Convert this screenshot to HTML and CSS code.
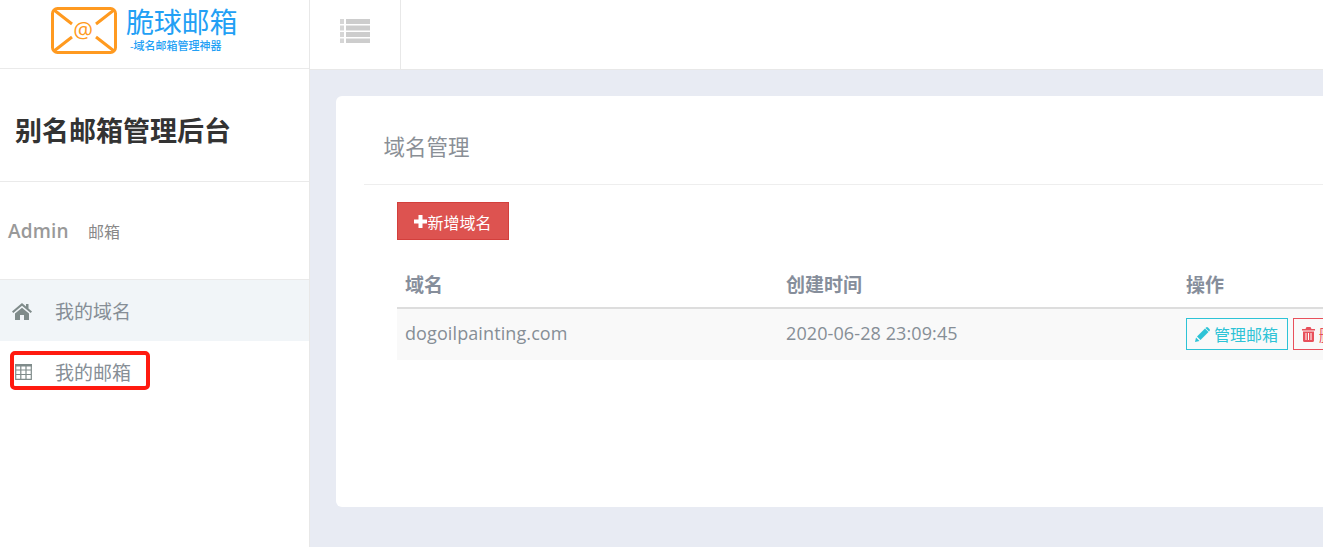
FILE: index.html
```html
<!DOCTYPE html>
<html lang="zh-CN">
<head>
    <meta charset="UTF-8">
    <title>别名邮箱管理后台</title>
    <link rel="stylesheet" href="styles.css">
</head>
<body>
    <div class="sidebar">
        <div class="logo">
            <svg class="logo-mark" width="66" height="47" viewBox="0 0 66 47">
                <rect x="1.5" y="1.5" width="63" height="44" rx="5" fill="#fff" stroke="#ff9a20" stroke-width="3"/>
                <path d="M3 3 L21 17 M63 3 L45 17 M3 44 L21 30 M63 44 L45 30" fill="none" stroke="#ff9a20" stroke-width="3"/>
                <text x="32" y="31" text-anchor="middle" class="logo-at">@</text>
            </svg>
            <div class="logo-text">
                <div class="logo-name">脆球邮箱</div>
                <div class="logo-sub">-域名邮箱管理神器</div>
            </div>
        </div>
        <h2 class="site-title">别名邮箱管理后台</h2>
        <div class="user-row"><span class="user-name">Admin</span><span class="user-mail">邮箱</span></div>
        <ul class="nav">
            <li class="active">
                <svg class="nav-icon" width="22" height="18" viewBox="0 0 22 18"><path d="M11 1 L1 9.5 L2.3 11 L11 3.8 L19.7 11 L21 9.5 L17.5 6.5 V2 H15 V4.4 Z M4 11.5 V18 H9 V13 H13 V18 H18 V11.5 L11 5.8 Z" fill="#7f8b8a"/></svg>
                <span>我的域名</span>
            </li>
            <li>
                <svg class="nav-icon" width="22" height="18" viewBox="0 0 22 18"><path d="M4 1 H21 V3.500 H4 Z" fill="#7f8b8a"/><path d="M4.700 1 V16.300 H20.300 V1 M4.700 7 H20.300 M4.700 11.500 H20.300 M9.800 3 V16.300 M15 3 V16.300" fill="none" stroke="#7f8b8a" stroke-width="1.200"/></svg>
                <span>我的邮箱</span>
            </li>
        </ul>
    </div>

    <div class="main">
        <div class="topbar">
            <div class="menu-toggle">
                <svg width="30" height="24" viewBox="0 0 30 24"><path d="M0 0 H4 V5 H0 Z M0 6.500 H4 V11.500 H0 Z M0 13 H4 V18 H0 Z M0 19.500 H4 V24 H0 Z" fill="#d6d6d6"/><path d="M6 0 H30 V5 H6 Z M6 6.500 H30 V11.500 H6 Z M6 13 H30 V18 H6 Z M6 19.500 H30 V24 H6 Z" fill="#cdcdcd"/></svg>
            </div>
        </div>
        <div class="content">
            <div class="card">
                <div class="card-title">域名管理</div>
                <div class="card-body">
                    <a class="btn-add"><svg width="13" height="13" viewBox="0 0 13 13"><path d="M4.500 0 H8.500 V4.500 H13 V8.500 H8.500 V13 H4.500 V8.500 H0 V4.500 H4.500 Z" fill="#fff"/></svg><span>新增域名</span></a>
                    <table>
                        <thead><tr><th class="col-domain">域名</th><th class="col-time">创建时间</th><th>操作</th></tr></thead>
                        <tbody>
                            <tr>
                                <td>dogoilpainting.com</td>
                                <td>2020-06-28 23:09:45</td>
                                <td class="actions">
                                    <a class="btn-line btn-info"><svg width="15" height="15" viewBox="0 0 15 15"><path d="M0 15 L1 10.500 L4.500 14 Z M2 9.500 L10 1.500 L13.500 5 L5.500 13 Z M11 .5 Q12 -.3 13 .5 L14.500 2 Q15.300 3 14.500 4 L14 4.500 L10.500 1 Z" fill="#2dc3d6"/></svg>管理邮箱</a>
                                    <a class="btn-line btn-danger"><svg width="13" height="15" viewBox="0 0 13 15"><path d="M4.500 0 H8.500 L9.500 2 H13 V3.500 H0 V2 H3.500 Z M1 4.500 H12 V13.500 Q12 15 10.500 15 H2.500 Q1 15 1 13.500 Z" fill="#e8505b"/><path d="M4 6 V13 M6.500 6 V13 M9 6 V13" stroke="#fff" stroke-width="1"/></svg>删除域名</a>
                                </td>
                            </tr>
                        </tbody>
                    </table>
                </div>
            </div>
        </div>
    </div>

    <div class="highlight"></div>
</body>
</html>
```

FILE: styles.css
```css
html, body {
    height: 100%;
}
body {
    margin: 0;
    display: flex;
    overflow: hidden;
    font-family: "Open Sans", "Noto Sans CJK SC", sans-serif;
    color: #8a8f96;
    background-color: #e8ebf3;
}
.sidebar {
    width: 309px;
    flex-shrink: 0;
    background-color: #fff;
    border-right: 1px solid #e8e8e8;
}
.logo {
    height: 68px;
    border-bottom: 1px solid #eaeaea;
    display: flex;
    align-items: flex-start;
    gap: 9px;
    padding-left: 51px;
}
.logo-mark {
    margin-top: 7px;
}
.logo-at {
    font-size: 22px;
    fill: #ff9a20;
    font-family: "Open Sans", sans-serif;
}
.logo-text {
    color: #22a0f5;
    margin-top: 6px;
}
.logo-name {
    font-size: 28px;
    line-height: 32px;
    letter-spacing: -.2px;
}
.logo-sub {
    font-size: 11px;
    line-height: 14px;
    font-weight: 500;
    margin: 1px 0 0 4px;
}
.site-title {
    margin: 0;
    height: 112px;
    line-height: 124px;
    padding-left: 15px;
    font-size: 27px;
    font-weight: 700;
    color: #333;
    border-bottom: 1px solid #eaeaea;
}
.user-row {
    height: 97px;
    padding-left: 8px;
    display: flex;
    align-items: center;
    gap: 19px;
    color: #999;
    border-bottom: 1px solid #eaeaea;
}
.user-name {
    font-size: 19px;
    font-weight: 600;
    letter-spacing: .2px;
}
.user-mail {
    font-size: 16px;
    color: #888;
    margin-top: 1px;
}
.nav {
    list-style: none;
    margin: 0;
    padding: 0;
}
.nav li {
    height: 61px;
    display: flex;
    align-items: center;
    padding-left: 11px;
    gap: 22px;
    font-size: 19px;
    color: #868e96;
}
.nav li span {
    padding-top: 1px;
}
.nav li.active {
    background-color: #f1f5f8;
}
.main {
    flex-grow: 1;
    min-width: 0;
}
.topbar {
    height: 69px;
    background-color: #fff;
    border-bottom: 1px solid #e8e8e8;
    display: flex;
}
.menu-toggle {
    width: 91px;
    padding: 19px 0 0 30px;
    box-sizing: border-box;
    border-right: 1px solid #e8e8e8;
}
.content {
    padding: 26px 0 0 26px;
}
.card {
    width: 1100px;
    height: 411px;
    background-color: #fff;
    border-radius: 6px 0 0 6px;
    padding-left: 28px;
}
.card-title {
    height: 88px;
    line-height: 102px;
    padding-left: 19.500px;
    font-size: 21.500px;
    color: #8a8f96;
    border-bottom: 1px solid #eee;
}
.card-body {
    padding: 17px 0 0 33px;
}
.btn-add {
    display: inline-flex;
    align-items: center;
    justify-content: center;
    width: 110px;
    height: 36px;
    background-color: #dd5350;
    border: 1px solid #d33f3c;
    color: #fff;
    font-size: 16px;
}
.btn-add span {
    padding-top: 2px;
}
table {
    width: 1060px;
    margin-top: 22px;
    border-collapse: collapse;
    table-layout: fixed;
}
th {
    height: 43px;
    padding: 0 8px 2px;
    text-align: left;
    font-size: 19px;
    font-weight: 700;
    color: #868e9b;
    border-bottom: 2px solid #ddd;
}
.col-domain {
    width: 365px;
}
.col-time {
    width: 384px;
}
td {
    height: 52px;
    padding: 0 8px 3px;
    box-sizing: border-box;
    font-size: 18px;
    letter-spacing: .1px;
    color: #868e96;
    background-color: #f9f9f9;
    white-space: nowrap;
}
td.actions {
    padding-bottom: 1px;
    letter-spacing: 0;
}
.btn-line {
    display: inline-flex;
    align-items: center;
    gap: 4px;
    height: 30px;
    padding: 0 9px 0 8px;
    border: 1px solid;
    font-size: 16px;
    vertical-align: middle;
}
.btn-info {
    color: #2dc3d6;
    border-color: #2dc3d6;
}
.btn-danger {
    color: #e8505b;
    border-color: #e8505b;
}
.highlight {
    position: absolute;
    left: 10px;
    top: 351px;
    width: 132px;
    height: 31px;
    border: 4px solid #ff1a10;
    border-radius: 5px;
}
```
